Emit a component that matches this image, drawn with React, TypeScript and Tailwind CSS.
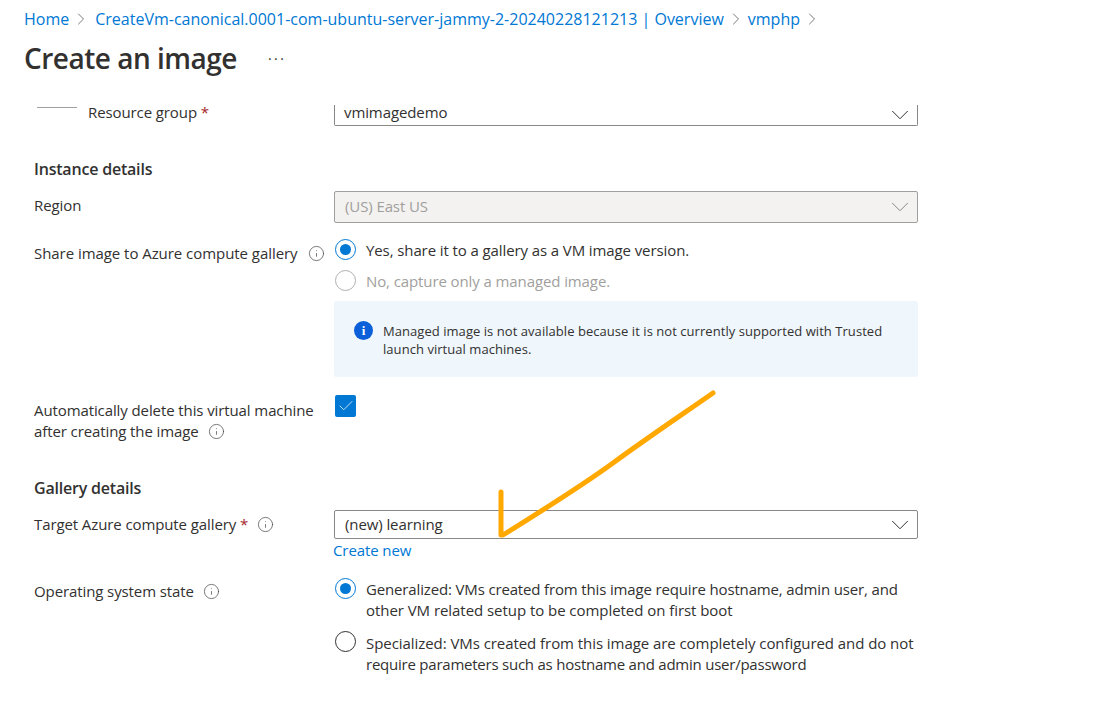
import { ChevronDown, ChevronRight, Check, Info } from "lucide-react";

function Hint() {
    return <Info size={17} strokeWidth={1} className="text-[#444] shrink-0" />;
}

function Chevron({ muted }: { muted?: boolean }) {
    return (
        <ChevronDown
            size={30}
            strokeWidth={0.8}
            className={muted ? "text-[#8a8886]" : "text-[#323130]"}
        />
    );
}

function Crumb() {
    return <ChevronRight size={20} strokeWidth={1} className="text-[#605e5c] ml-[2px] mr-[4px] shrink-0" />;
}

function Radio({ checked, muted, label }: { checked?: boolean; muted?: boolean; label: React.ReactNode }) {
    return (
        <div className="flex gap-[10px] ml-px">
            <div
                className={`w-[21px] h-[21px] rounded-full border-[1.5px] shrink-0 flex items-center justify-center ${
                    checked ? "border-[#0078d4]" : muted ? "border-[#b3b0ad]" : "border-[#323130]"
                }`}
            >
                {checked && <div className="w-[11px] h-[11px] rounded-full bg-[#0078d4]" />}
            </div>
            <div className={`leading-[21px] mt-px ${muted ? "text-[#a19f9d]" : "text-[#323130]"}`}>{label}</div>
        </div>
    );
}

export default function App() {
    return (
        <div className="w-[1098px] h-[718px] relative overflow-hidden bg-white text-[15px] text-[#323130] font-['Open_Sans','Liberation_Sans',sans-serif] tracking-[-0.1px]">
            {/* Header */}
            <div className="h-[105px] pl-6 pt-[8px]">
                <div className="flex items-center h-[22px] text-[16px] tracking-normal text-[#0078d4]">
                    <span>Home</span>
                    <Crumb />
                    <span>CreateVm-canonical.0001-com-ubuntu-server-jammy-2-20240228121213 | Overview</span>
                    <Crumb />
                    <span className="-ml-[2px]">vmphp</span>
                    <Crumb />
                </div>
                <div className="flex items-center mt-[10px] h-[36px]">
                    <h1 className="text-[28px] font-semibold tracking-[-0.5px]">Create an image</h1>
                    <span className="ml-[31px] text-[#323130] text-[14px] tracking-[2.5px]">···</span>
                </div>
            </div>

            {/* Form */}
            <div className="pl-[34px] w-[918px]">
                <div className="grid grid-cols-[300px_584px] h-[21px]">
                    <div className="flex items-center gap-[11px]">
                        <div className="w-10 h-px bg-[#a19f9d] ml-[3px] -mt-[16px]" />
                        <span className="-mt-[7px]">
                            Resource group <span className="text-[#a4262c]">*</span>
                        </span>
                    </div>
                    <div className="h-[21px] border border-t-0 border-[#8a8886] rounded-b-[2px] flex items-center justify-between pl-[9px] pr-[2px]">
                        <span className="-mt-[6px]">vmimagedemo</span>
                        <Chevron />
                    </div>
                </div>

                <h2 className="mt-[32px] text-[16px] font-semibold leading-[22px] tracking-[-0.2px]">Instance details</h2>

                <div className="grid grid-cols-[300px_584px] mt-[11px] h-[29px]">
                    <div className="leading-[28px]">Region</div>
                    <div className="border border-[#a19f9d] rounded-[2px] bg-[#f3f2f1] flex items-center justify-between pl-[10px] pr-[2px] text-[#a19f9d]">
                        <span className="-mt-[2px]">(US) East US</span>
                        <Chevron muted />
                    </div>
                </div>

                <div className="grid grid-cols-[300px_584px] mt-[19px]">
                    <div className="flex items-center gap-[10px] h-[28px] self-start">
                        <span className="tracking-[-0.05px]">Share image to Azure compute gallery</span>
                        <Hint />
                    </div>
                    <div>
                        <Radio checked label="Yes, share it to a gallery as a VM image version." />
                        <div className="mt-[9px]">
                            <Radio muted label="No, capture only a managed image." />
                        </div>
                        <div className="mt-[9px] h-[76px] bg-[#eff6fc] rounded-[2px] flex gap-[10px] pl-[20px] pr-[20px] pt-[20px] text-[13px] leading-[18px] tracking-[0.05px]">
                            <div className="w-[19px] h-[19px] rounded-full bg-[#0b5fd8] shrink-0 flex items-center justify-center text-white text-[13px] font-bold font-['Liberation_Serif',serif]">
                                i
                            </div>
                            <div className="mt-px">
                                Managed image is not available because it is not currently supported with Trusted launch virtual machines.
                            </div>
                        </div>
                    </div>
                </div>

                <div className="grid grid-cols-[300px_584px] mt-[18px]">
                    <div className="leading-[21px] pt-[5px]">
                        <div>Automatically delete this virtual machine</div>
                        <div className="flex items-center gap-[9px]">
                            <span>after creating the image</span>
                            <Hint />
                        </div>
                    </div>
                    <div className="w-[21px] h-[22px] ml-px bg-[#0078d4] rounded-[2px] flex items-center justify-center">
                        <Check size={18} strokeWidth={1} className="text-white" />
                    </div>
                </div>

                <h2 className="mt-[35px] text-[16px] font-semibold leading-[22px] tracking-[-0.2px]">Gallery details</h2>

                <div className="grid grid-cols-[300px_584px] mt-[11px]">
                    <div className="flex items-center gap-[9px] h-[29px] self-start">
                        <span>
                            Target Azure compute gallery <span className="text-[#a4262c]">*</span>
                        </span>
                        <Hint />
                    </div>
                    <div>
                        <div className="h-[29px] border border-[#8a8886] rounded-[2px] flex items-center justify-between pl-[10px] pr-[2px]">
                            <span>(new) learning</span>
                            <Chevron />
                        </div>
                        <div className="text-[#0078d4] leading-[21px] mt-px -ml-px">Create new</div>
                    </div>
                </div>

                <div className="grid grid-cols-[300px_584px] mt-[17px]">
                    <div className="flex items-center gap-[9px] h-[27px]">
                        <span>Operating system state</span>
                        <Hint />
                    </div>
                    <div>
                        <Radio
                            checked
                            label={
                                <>
                                    <span className="tracking-[-0.15px]">
                                        Generalized: VMs created from this image require hostname, admin user, and
                                    </span>
                                    <br />
                                    <span className="tracking-[-0.05px]">
                                        other VM related setup to be completed on first boot
                                    </span>
                                </>
                            }
                        />
                        <div className="mt-[10px]">
                            <Radio
                                label={
                                    <div className="mt-px">
                                        <span className="tracking-[-0.06px]">
                                            Specialized: VMs created from this image are completely configured and do not
                                        </span>
                                        <br />
                                        <span className="tracking-[-0.23px]">
                                            require parameters such as hostname and admin user/password
                                        </span>
                                    </div>
                                }
                            />
                        </div>
                    </div>
                </div>
            </div>

            {/* Hand-drawn annotation */}
            <svg className="absolute left-0 top-0 pointer-events-none" width="1098" height="718" fill="none">
                <path
                    d="M713 393 C680 416 650 436 613 463 C580 487 540 512 503 535 L501 535 L501 492"
                    stroke="#ffa800"
                    strokeWidth="5"
                    strokeLinecap="round"
                    strokeLinejoin="round"
                />
            </svg>
        </div>
    );
}
